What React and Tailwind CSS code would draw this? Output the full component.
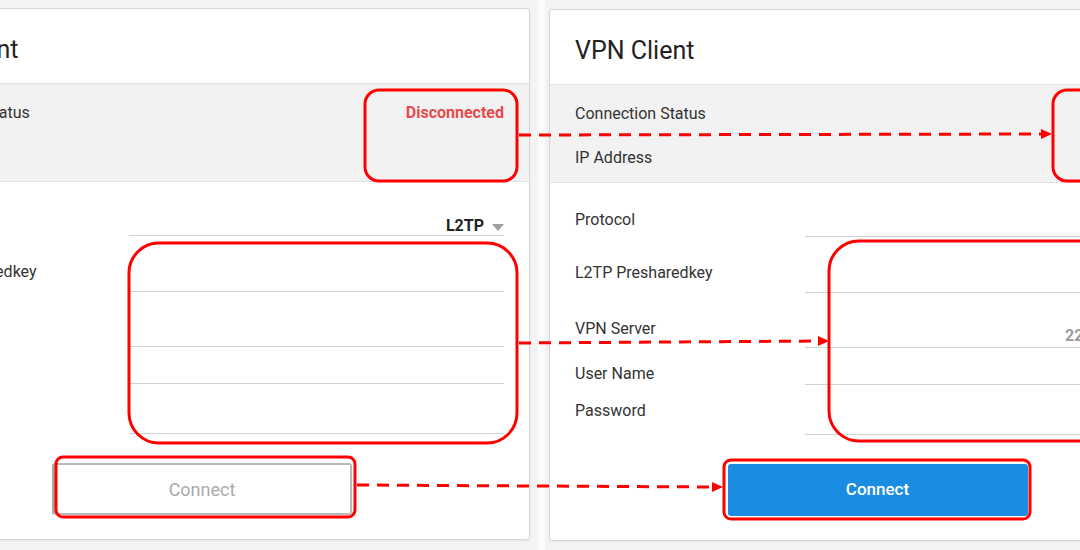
import React from 'react';

const rows = [
  { label: 'Protocol', h: 'h-[54px]', top: 'pt-[27px]', key: 'protocol' },
  { label: 'L2TP Presharedkey', h: 'h-[56px]', top: 'pt-[26px]', key: 'psk' },
  { label: 'VPN Server', h: 'h-[55px]', top: 'pt-[26px]', key: 'server' },
  { label: 'User Name', h: 'h-[37px]', top: 'pt-[16px]', key: 'user' },
  { label: 'Password', h: 'h-[50px]', top: 'pt-[16px]', key: 'password' },
];

function FieldValue({ name, connected }) {
  if (name === 'protocol') {
    return (
      <div className="pt-[34px] flex items-center justify-end leading-[20px]">
        <span className="text-[16px] font-bold text-[#222]">L2TP</span>
        <span className="ml-[8px] mt-[2px] w-0 h-0 border-l-[6px] border-r-[6px] border-t-[7px] border-l-transparent border-r-transparent border-t-[#a0a0a0]" />
      </div>
    );
  }
  if (name === 'server' && connected) {
    return (
      <div className="pt-[33px] text-right text-[16px] leading-[20px] font-bold text-[#9a9a9a]">220.130.15.121</div>
    );
  }
  if (name === 'user' && connected) {
    return <div className="pt-[16px] text-right text-[16px] leading-[20px] font-bold text-[#9a9a9a]">vpnuser</div>;
  }
  return null;
}

function VpnCard({ connected }) {
  return (
    <div className="w-[657px] h-[532px] bg-white border border-[#d6d6d6] rounded-[3px] shadow-[0_1px_2px_rgba(0,0,0,0.06)] flex flex-col text-[#333]">
      <div className="h-[75px] shrink-0 px-[25px] pt-[25px] border-b border-[#e2e2e2]">
        <h2 className="text-[25px] leading-[32px] text-[#222]">VPN Client</h2>
      </div>

      <div className="h-[98px] shrink-0 bg-[#f2f2f2] border-b border-[#e2e2e2] px-[25px] pt-[19px] text-[16px] leading-[20px]">
        <div className="flex justify-between">
          <span>Connection Status</span>
          {connected ? (
            <span className="font-bold text-[#43a047]">Connected</span>
          ) : (
            <span className="font-bold text-[#e84a4a]">Disconnected</span>
          )}
        </div>
        <div className="flex justify-between mt-[24px]">
          <span>IP Address</span>
          {connected && <span className="font-bold text-[#333]">10.0.0.15</span>}
        </div>
      </div>

      <div className="flex flex-col">
        {rows.map((r) => (
          <div key={r.key} className={`flex ${r.h}`}>
            <div className={`w-[255px] pl-[25px] ${r.top} text-[16px] leading-[20px]`}>{r.label}</div>
            <div className="w-[375px] h-full border-b border-[#d2d2d2]">
              <FieldValue name={r.key} connected={connected} />
            </div>
          </div>
        ))}
      </div>

      <div className="flex justify-center mt-[29px]">
        {connected ? (
          <button className="w-[300px] h-[52px] rounded-[3px] bg-[#1a8de3] text-white text-[17px] font-medium">
            Connect
          </button>
        ) : (
          <button className="w-[300px] h-[52px] rounded-[3px] bg-white border-2 border-[#b9b9b9] border-l-[3px] border-l-[#a9a9a9] text-[#aaaaaa] text-[18px]">
            Connect
          </button>
        )}
      </div>
    </div>
  );
}

function Annotations() {
  const red = '#ff0000';
  return (
    <svg className="absolute inset-0 pointer-events-none" width="1080" height="550">
      <g fill="none" stroke={red} strokeWidth="3">
        <rect x="365" y="90" width="152" height="91" rx="14" />
        <rect x="129" y="243" width="388" height="200" rx="30" />
        <rect x="56" y="457" width="299" height="60" rx="7" />
        <rect x="1053" y="90" width="80" height="91" rx="14" />
        <rect x="829" y="241" width="300" height="200" rx="30" />
        <rect x="724" y="460" width="306" height="59" rx="7" />
      </g>
      <g fill="none" stroke={red} strokeWidth="3" strokeDasharray="12 8">
        <path d="M519 135 L1042 134" />
        <path d="M519 343 L819 341" />
        <path d="M357 485 L713 487" />
      </g>
      <g fill={red}>
        <polygon points="1041,129 1052,134 1041,139" />
        <polygon points="818,336 829,341 818,346" />
        <polygon points="712,482 723,487 712,492" />
      </g>
    </svg>
  );
}

export default function App() {
  return (
    <div className="relative w-[1080px] h-[550px] overflow-hidden bg-[#f3f3f3] flex font-['Roboto','Liberation_Sans',sans-serif]">
      <div className="w-[538px] shrink-0 overflow-hidden pt-2">
        <div className="ml-[-127px]">
          <VpnCard connected={false} />
        </div>
      </div>
      <div className="w-[7px] shrink-0 bg-[#fbfbfb]" />
      <div className="flex-1 min-w-0 overflow-hidden pl-[4px] pt-[9px]">
        <VpnCard connected={true} />
      </div>
      <Annotations />
    </div>
  );
}
